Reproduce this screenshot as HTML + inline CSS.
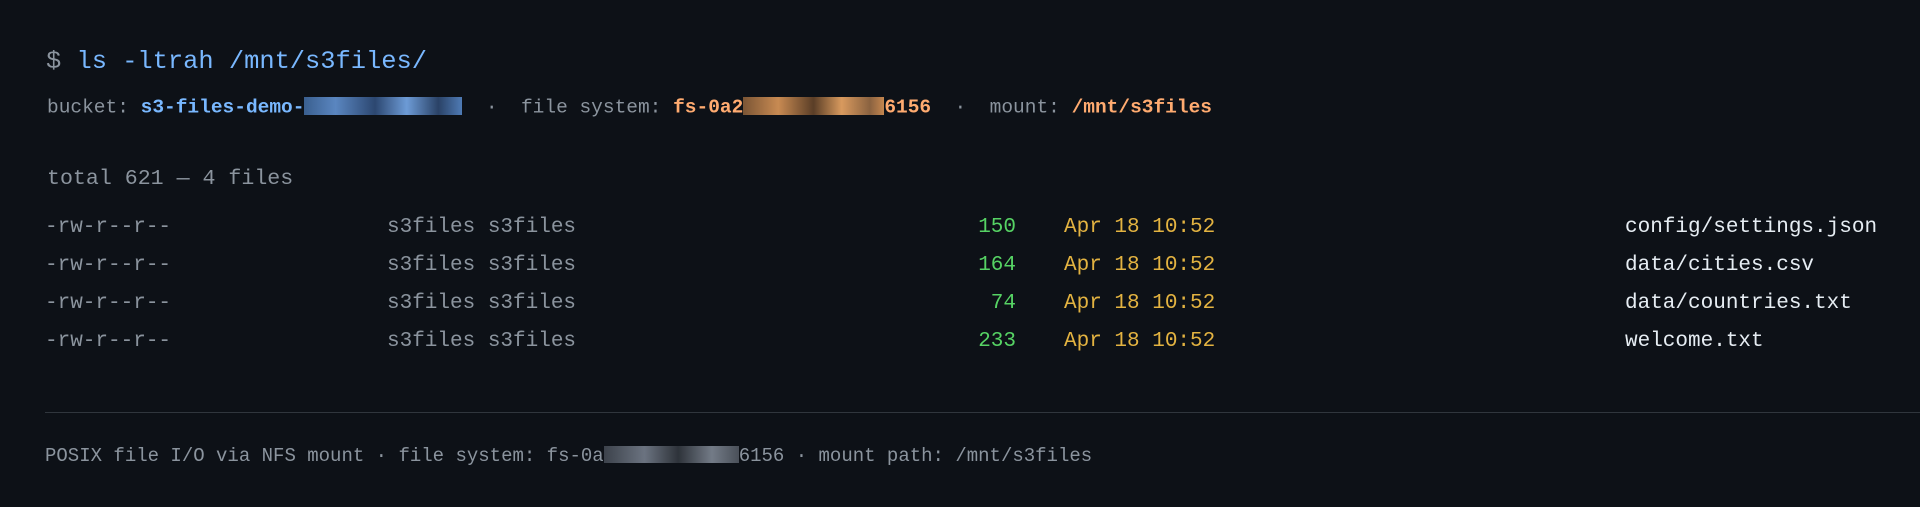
<!DOCTYPE html>
<html><head><meta charset="utf-8"><style>
html,body{margin:0;padding:0;background:#0d1117;width:1920px;height:507px;overflow:hidden}
body{font-family:"Liberation Mono","DejaVu Sans Mono",monospace;color:#8b949e;position:relative}
.a{position:absolute;white-space:pre;line-height:1}
.b{color:#79b8ff;font-weight:bold}
.o{color:#ffab70;font-weight:bold}
.g{color:#56d364}
.y{color:#e3b341}
.w{color:#e6edf3}
.rb{display:inline-block;height:0.9em;vertical-align:-0.1em;background:linear-gradient(90deg,#3a5f8f,#5a86c0 20%,#2c4770 45%,#6d9bd6 65%,#2a4266 85%,#4f7bb5)}
.ro{display:inline-block;height:0.9em;vertical-align:-0.1em;background:linear-gradient(90deg,#7a5535,#c88a52 25%,#5a3e27 50%,#d89a5e 70%,#8a6240 90%,#c4864f)}
.rg{display:inline-block;height:0.9em;vertical-align:-0.1em;background:linear-gradient(90deg,#3c424b,#6b7380 30%,#2e333a 55%,#737b87 80%,#4a5059)}
</style></head><body>
<div class="a" style="left:46px;top:49px;font-size:25.4px"><span>$ </span><span style="color:#79b8ff">ls -ltrah /mnt/s3files/</span></div>
<div class="a" style="left:47px;top:97px;font-size:19.5px">bucket: <span class="b">s3-files-demo-</span><span class="rb" style="width:158px"></span>  ·  file system: <span class="o">fs-0a2</span><span class="ro" style="width:141px"></span><span class="o">6156</span>  ·  mount: <span class="o">/mnt/s3files</span></div>
<div class="a" style="left:47px;top:169px;font-size:21.6px">total 621 — 4 files</div>

<div class="a" style="left:45px;top:217px;font-size:21px">-rw-r--r--</div>
<div class="a" style="left:387px;top:217px;font-size:21px">s3files s3files</div>
<div class="a g" style="left:900px;width:116px;text-align:right;top:217px;font-size:21px">150</div>
<div class="a y" style="left:1064px;top:217px;font-size:21px">Apr 18 10:52</div>
<div class="a w" style="left:1625px;top:217px;font-size:21px">config/settings.json</div>

<div class="a" style="left:45px;top:255px;font-size:21px">-rw-r--r--</div>
<div class="a" style="left:387px;top:255px;font-size:21px">s3files s3files</div>
<div class="a g" style="left:900px;width:116px;text-align:right;top:255px;font-size:21px">164</div>
<div class="a y" style="left:1064px;top:255px;font-size:21px">Apr 18 10:52</div>
<div class="a w" style="left:1625px;top:255px;font-size:21px">data/cities.csv</div>

<div class="a" style="left:45px;top:293px;font-size:21px">-rw-r--r--</div>
<div class="a" style="left:387px;top:293px;font-size:21px">s3files s3files</div>
<div class="a g" style="left:900px;width:116px;text-align:right;top:293px;font-size:21px">74</div>
<div class="a y" style="left:1064px;top:293px;font-size:21px">Apr 18 10:52</div>
<div class="a w" style="left:1625px;top:293px;font-size:21px">data/countries.txt</div>

<div class="a" style="left:45px;top:331px;font-size:21px">-rw-r--r--</div>
<div class="a" style="left:387px;top:331px;font-size:21px">s3files s3files</div>
<div class="a g" style="left:900px;width:116px;text-align:right;top:331px;font-size:21px">233</div>
<div class="a y" style="left:1064px;top:331px;font-size:21px">Apr 18 10:52</div>
<div class="a w" style="left:1625px;top:331px;font-size:21px">welcome.txt</div>

<div style="position:absolute;left:45px;right:0;top:412px;height:1px;background:#30363d"></div>
<div class="a" style="left:45px;top:446px;font-size:19px">POSIX file I/O via NFS mount · file system: fs-0a<span class="rg" style="width:135px"></span>6156 · mount path: /mnt/s3files</div>
</body></html>
